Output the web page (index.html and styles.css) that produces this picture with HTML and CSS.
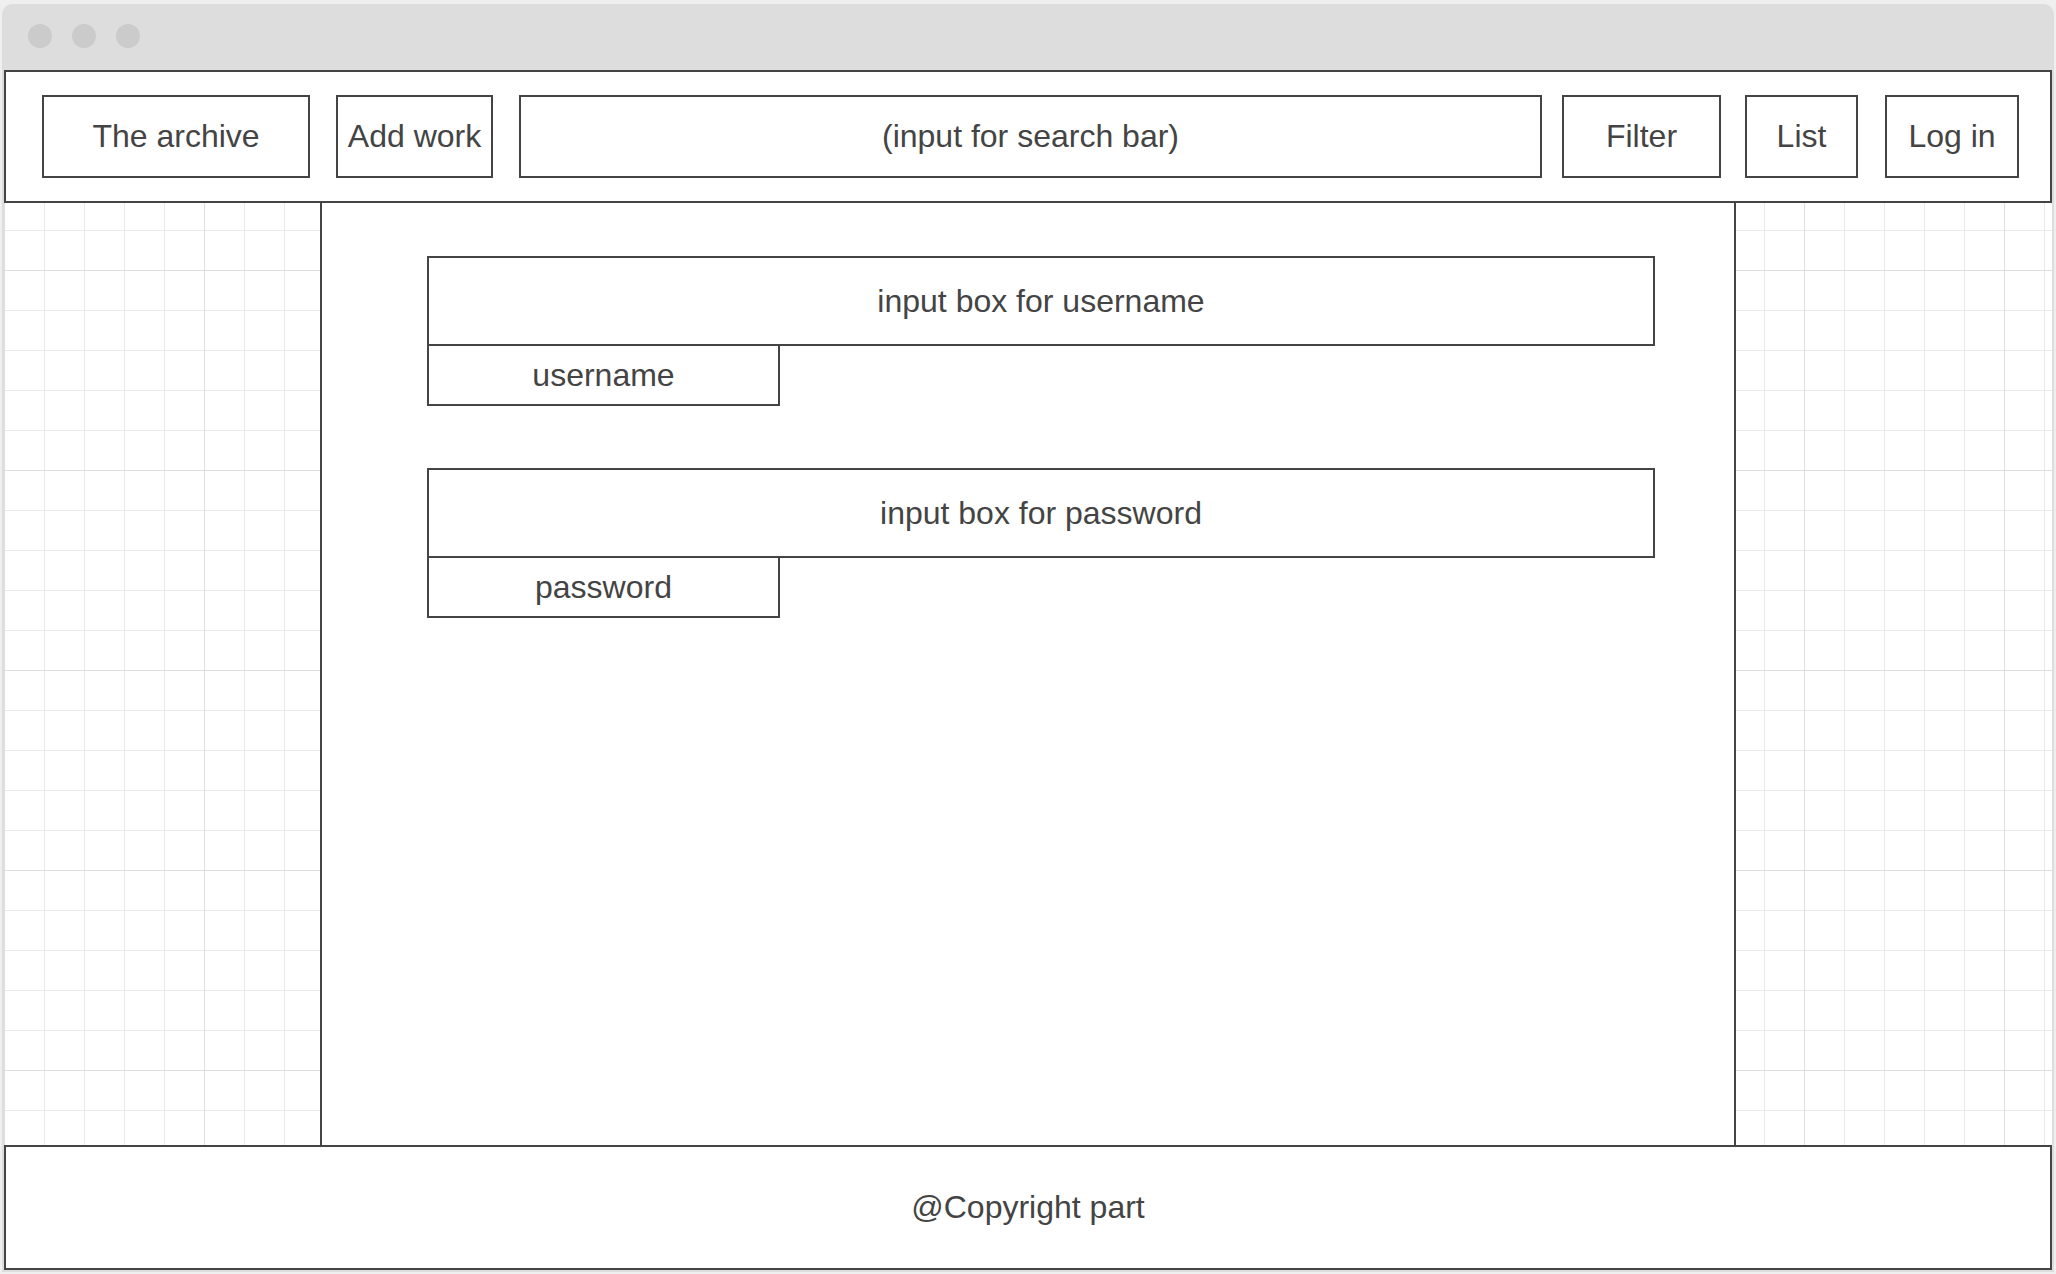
FILE: index.html
```html
<!DOCTYPE html>
<html lang="en">
<head>
    <meta charset="UTF-8">
    <meta name="viewport" content="width=device-width, initial-scale=1.0">
    <title>The archive - Log in</title>
    <link rel="stylesheet" href="styles.css">
</head>
<body>
    <div class="window">
        <div class="titlebar">
            <span class="dot"></span>
            <span class="dot"></span>
            <span class="dot"></span>
        </div>
        <header class="topbar">
            <div class="box nav-archive">The archive</div>
            <div class="box nav-add">Add work</div>
            <div class="box nav-search">(input for search bar)</div>
            <div class="box nav-filter">Filter</div>
            <div class="box nav-list">List</div>
            <div class="box nav-login">Log in</div>
        </header>
        <div class="middle">
            <div class="side"></div>
            <main class="content">
                <form class="login-form">
                    <div class="field">
                        <div class="field-input">input box for username</div>
                        <div class="field-label">username</div>
                    </div>
                    <div class="field">
                        <div class="field-input">input box for password</div>
                        <div class="field-label">password</div>
                    </div>
                </form>
            </main>
            <div class="side"></div>
        </div>
        <footer class="footer">@Copyright part</footer>
    </div>
</body>
</html>
```

FILE: styles.css
```css
html, body {
    margin: 0;
    height: 100%;
}

body {
    background-color: #efefef;
    font-family: "Liberation Sans", Arial, sans-serif;
    font-size: 32px;
    color: #444;
}

.window {
    margin: 4px 2px 0 2px;
    padding: 0 2px 2px 2px;
    background-color: #dddddd;
    border-radius: 10px 10px 0 0;
}

.titlebar {
    height: 66px;
    box-sizing: border-box;
    padding: 20px 0 0 24px;
    display: flex;
    gap: 20px;
}

.dot {
    width: 24px;
    height: 24px;
    border-radius: 50%;
    background-color: #cbcbcb;
}

.topbar {
    height: 133px;
    box-sizing: border-box;
    border: 2px solid #444;
    background-color: #fff;
    display: flex;
    align-items: center;
    padding: 0 31px 0 36px;
}

.box {
    height: 83px;
    box-sizing: border-box;
    border: 2px solid #444;
    display: flex;
    align-items: center;
    justify-content: center;
    white-space: nowrap;
}

.nav-archive {
    width: 268px;
}

.nav-add {
    width: 157px;
    margin-left: 26px;
}

.nav-search {
    flex: 1;
    margin-left: 26px;
}

.nav-filter {
    width: 159px;
    margin-left: 20px;
}

.nav-list {
    width: 113px;
    margin-left: 24px;
}

.nav-login {
    width: 134px;
    margin-left: 27px;
}

.middle {
    height: 942px;
    display: grid;
    grid-template-columns: 316px 1fr 316px;
    background-color: #fff;
    background-image:
        linear-gradient(to right, #dedede 1px, transparent 1px),
        linear-gradient(to bottom, #dedede 1px, transparent 1px),
        linear-gradient(to right, #e9e9e9 1px, transparent 1px),
        linear-gradient(to bottom, #e9e9e9 1px, transparent 1px);
    background-size: 200px 200px, 200px 200px, 40px 40px, 40px 40px;
    background-position: 0 0, 0 67px, 0 0, 0 27px;
}

.content {
    background-color: #fff;
    border-left: 2px solid #444;
    border-right: 2px solid #444;
}

.login-form {
    padding: 53px 0 0 105px;
    display: flex;
    flex-direction: column;
    gap: 62px;
}

.field {
    width: 1228px;
}

.field-input {
    height: 90px;
    box-sizing: border-box;
    border: 2px solid #444;
    display: flex;
    align-items: center;
    justify-content: center;
}

.field-label {
    width: 353px;
    height: 60px;
    box-sizing: border-box;
    border: 2px solid #444;
    border-top: none;
    display: flex;
    align-items: center;
    justify-content: center;
}

.footer {
    height: 125px;
    box-sizing: border-box;
    border: 2px solid #444;
    background-color: #fff;
    display: flex;
    align-items: center;
    justify-content: center;
}
```
